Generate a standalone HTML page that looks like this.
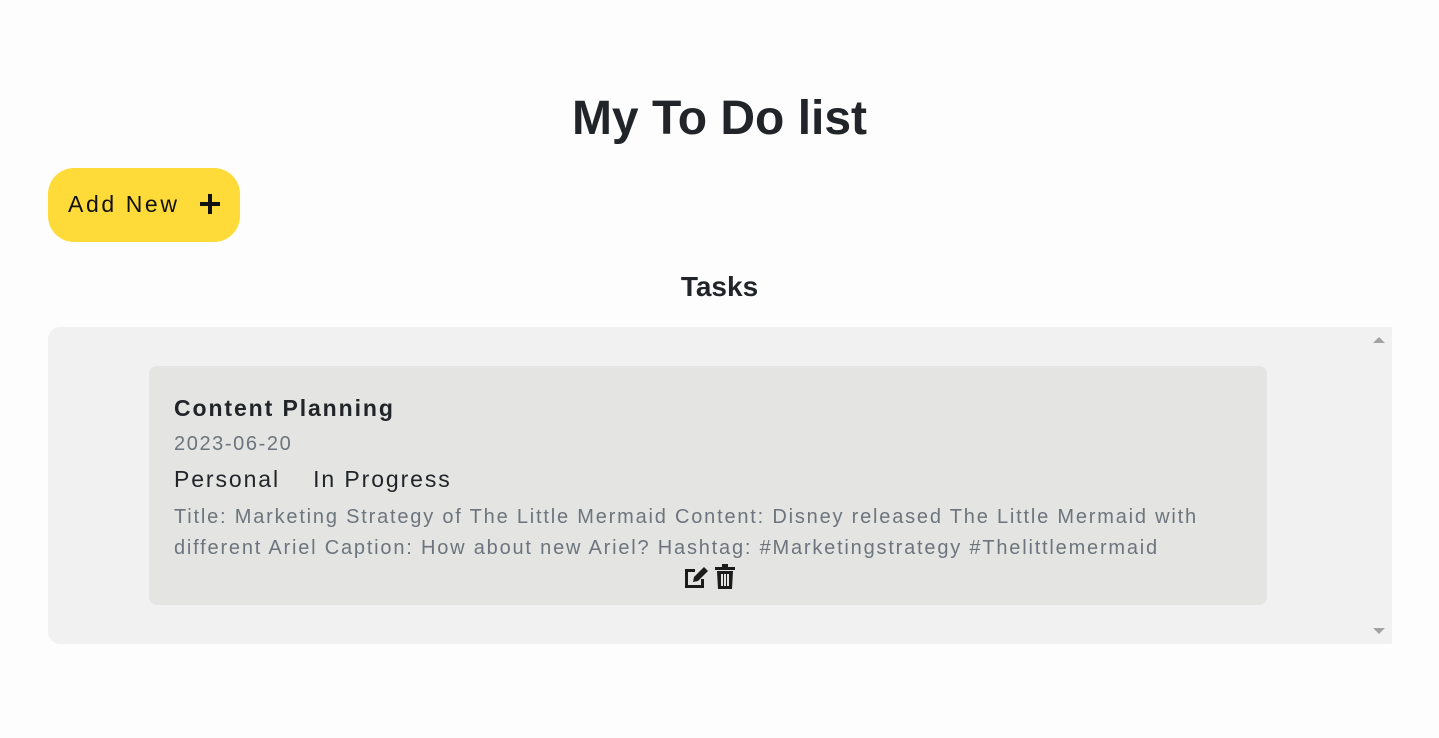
<!DOCTYPE html>
<html><head><meta charset="utf-8"><style>
html,body{margin:0;padding:0;background:#fdfdfd;width:1439px;height:738px;overflow:hidden;font-family:"Liberation Sans",sans-serif;color:#212529}
h1{position:absolute;left:0;width:1439px;top:89px;margin:0;text-align:center;font-size:48px;font-weight:bold;line-height:60px}
.btn{position:absolute;left:48px;top:168px;width:192px;height:74px;border-radius:26px;background:#ffdb3a;color:#111}
.btn span{position:absolute;left:20px;top:23px;font-size:23px;letter-spacing:2.6px}
.plus{position:absolute;left:200px;top:194px;width:20px;height:20px}
h2{position:absolute;left:0;width:1439px;top:269px;margin:0;text-align:center;font-size:28px;font-weight:bold;line-height:36px}
.box{position:absolute;left:48px;top:327px;width:1344px;height:317px;background:#f1f1f1;border-radius:12px 2px 2px 12px}
.card{position:absolute;left:149px;top:366px;width:1118px;height:239px;background:#e4e4e2;border-radius:8px}
.t{position:absolute;left:174px;white-space:nowrap}
</style></head><body>
<h1>My To Do list</h1>
<div class="btn"><span>Add New</span></div>
<svg class="plus" viewBox="0 0 20 20"><rect x="8" y="0" width="4" height="20" fill="#111"/><rect x="0" y="8" width="20" height="4" fill="#111"/></svg>
<h2>Tasks</h2>
<div class="box"></div>
<svg style="position:absolute;left:1373px;top:336px" width="12" height="8"><path d="M0 7L6 1L12 7Z" fill="#a3a3a3"/></svg>
<svg style="position:absolute;left:1373px;top:627px" width="12" height="8"><path d="M0 1L6 7L12 1Z" fill="#a3a3a3"/></svg>
<div class="card"></div>
<div class="t" style="top:395px;font-size:23px;font-weight:bold;letter-spacing:1.9px">Content Planning</div>
<div class="t" style="top:433px;font-size:20px;color:#6c757d;letter-spacing:1.6px">2023-06-20</div>
<div class="t" style="top:466px;font-size:23px;letter-spacing:1.9px">Personal&nbsp;&nbsp;&nbsp;&nbsp;In Progress</div>
<div class="t" style="top:502px;font-size:20px;color:#6c757d;line-height:31px;letter-spacing:1.8px">Title: Marketing Strategy of The Little Mermaid Content: Disney released The Little Mermaid with<br>different Ariel Caption: How about new Ariel? Hashtag: #Marketingstrategy #Thelittlemermaid</div>
<svg style="position:absolute;left:683px;top:565px" width="28" height="25" viewBox="0 0 28 25"><path d="M2 4H12V7H5V20H18V14H21V23H2Z" fill="#1c1c1c"/><path d="M10 17L11 12L21 2L25 6L15 16Z" fill="#1c1c1c"/></svg>
<svg style="position:absolute;left:714px;top:564px" width="22" height="26" viewBox="0 0 22 26"><rect x="1" y="3" width="20" height="3" fill="#1c1c1c"/><rect x="8" y="0" width="6" height="4" fill="#1c1c1c"/><path d="M3 7H19L18 25H4Z" fill="#1c1c1c"/><rect x="7" y="10" width="2" height="12" fill="#e4e4e2"/><rect x="10" y="10" width="2" height="12" fill="#e4e4e2"/><rect x="13" y="10" width="2" height="12" fill="#e4e4e2"/></svg>
</body></html>
